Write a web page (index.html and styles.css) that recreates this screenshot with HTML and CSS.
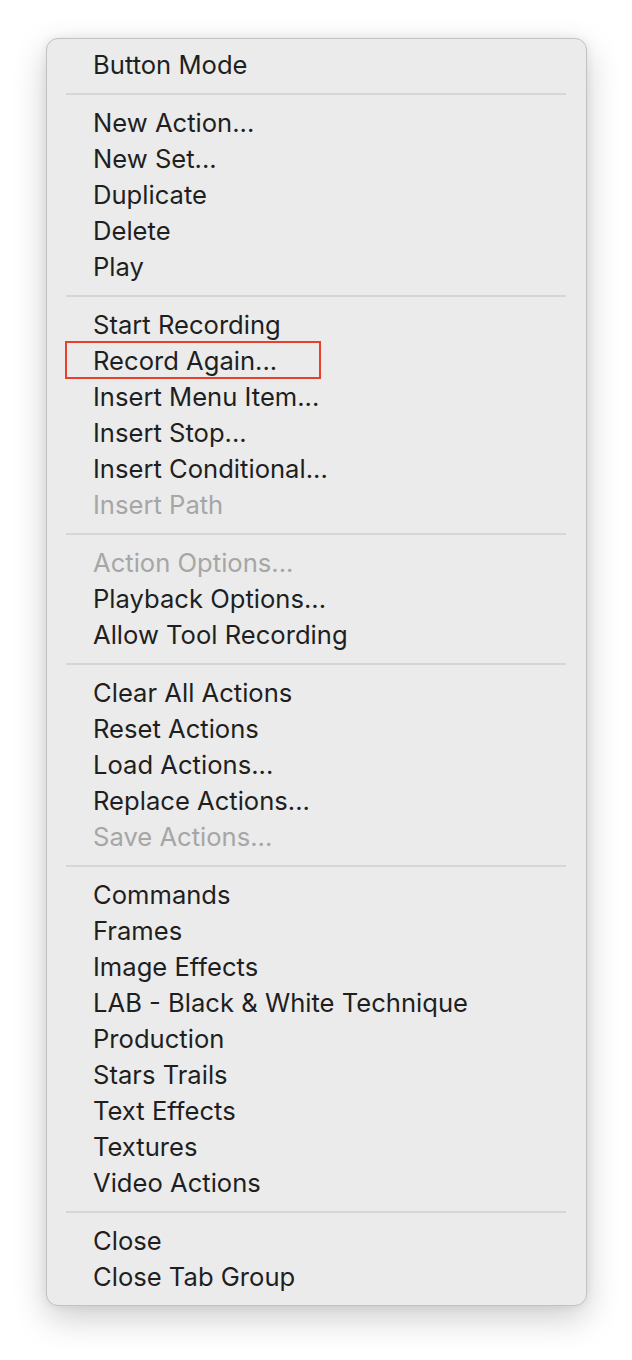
FILE: index.html
```html
<!DOCTYPE html>
<html lang="en">
<head>
<meta charset="utf-8">
<link rel="stylesheet" href="styles.css">
</head>
<body>
<div class="menu">
  <div class="item">Button Mode</div>
  <div class="sep"></div>
  <div class="item">New Action...</div>
  <div class="item">New Set...</div>
  <div class="item">Duplicate</div>
  <div class="item">Delete</div>
  <div class="item">Play</div>
  <div class="sep"></div>
  <div class="item">Start Recording</div>
  <div class="item marked">Record Again...<span class="mark"></span></div>
  <div class="item">Insert Menu Item...</div>
  <div class="item">Insert Stop...</div>
  <div class="item">Insert Conditional...</div>
  <div class="item disabled">Insert Path</div>
  <div class="sep"></div>
  <div class="item disabled">Action Options...</div>
  <div class="item">Playback Options...</div>
  <div class="item">Allow Tool Recording</div>
  <div class="sep"></div>
  <div class="item">Clear All Actions</div>
  <div class="item">Reset Actions</div>
  <div class="item">Load Actions...</div>
  <div class="item">Replace Actions...</div>
  <div class="item disabled">Save Actions...</div>
  <div class="sep"></div>
  <div class="item">Commands</div>
  <div class="item">Frames</div>
  <div class="item">Image Effects</div>
  <div class="item">LAB - Black &amp; White Technique</div>
  <div class="item">Production</div>
  <div class="item">Stars Trails</div>
  <div class="item">Text Effects</div>
  <div class="item">Textures</div>
  <div class="item">Video Actions</div>
  <div class="sep"></div>
  <div class="item">Close</div>
  <div class="item">Close Tab Group</div>
</div>
</body>
</html>
```
FILE: styles.css
```css
html, body {
  margin: 0;
  padding: 0;
  background: #ffffff;
}
body {
  font-family: Inter, "Liberation Sans", sans-serif;
  padding-bottom: 54px;
}
.menu {
  box-sizing: border-box;
  margin: 38px 0 0 46px;
  width: 541px;
  padding: 8px 0 10px;
  background: #ebebeb;
  border: 1px solid #c2c2c2;
  border-radius: 12px;
  box-shadow: 0 12px 34px rgba(0, 0, 0, 0.2), 0 0 10px rgba(0, 0, 0, 0.07);
}
.item {
  position: relative;
  height: 36px;
  line-height: 36px;
  padding-left: 46px;
  font-size: 25.6px;
  color: #1f1f1f;
  white-space: nowrap;
}
.item.disabled {
  color: #a6a6a6;
}
.sep {
  height: 2px;
  margin: 10px 20px 10px 19px;
  background: #d6d6d6;
}
.mark {
  position: absolute;
  left: 18px;
  top: -2px;
  width: 256px;
  height: 38px;
  box-sizing: border-box;
  border: 2px solid #e8402a;
}
```
